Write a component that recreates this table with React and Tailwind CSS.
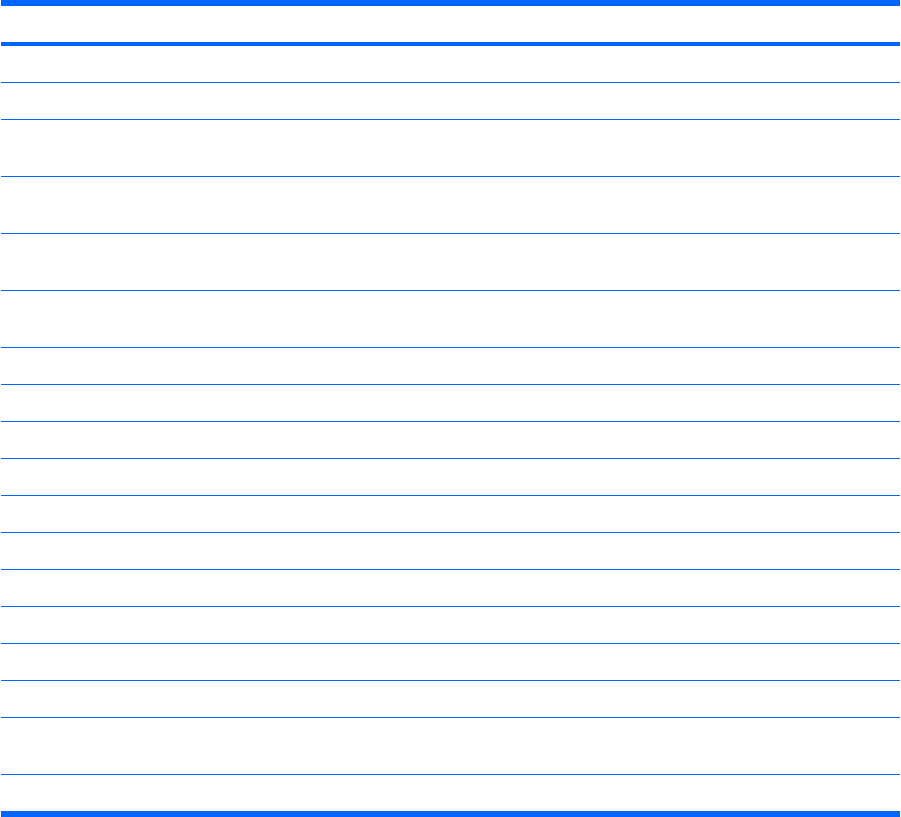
import React from "react";

const rows = [36, 36, 56, 56, 56, 56, 36, 36, 36, 36, 36, 36, 36, 36, 36, 36, 56, 36];

export default function App() {
  return (
    <div className="bg-white w-[901px] h-[817px]" style={{ fontFamily: '"Liberation Sans", Arial, sans-serif' }}>
      <div className="ml-[1px] w-[899px] flex flex-col">
        <div className="h-[6px] bg-[#0066ff]" />
        <div className="h-[36px]" />
        <div className="h-[4px] bg-[#0066ff]" />
        {rows.map((h, i) => (
          <div
            key={i}
            className={i < rows.length - 1 ? "border-b border-[#0066ff]" : ""}
            style={{ height: h + (i < rows.length - 1 ? 1 : 0) }}
          />
        ))}
        <div className="h-[6px] bg-[#0066ff]" />
      </div>
    </div>
  );
}
